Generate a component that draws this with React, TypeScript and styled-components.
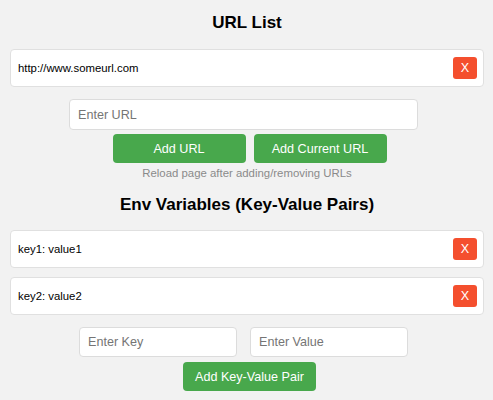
import React, { useState } from 'react';
import styled, { createGlobalStyle } from 'styled-components';

const GlobalStyle = createGlobalStyle`
  html, body {
    margin: 0;
    padding: 0;
    background: #f2f2f2;
  }
  body {
    font-family: "Liberation Sans", Arial, Helvetica, sans-serif;
    color: #111;
  }
  * {
    box-sizing: border-box;
  }
`;

const App: React.FC = () => {
  const [urls] = useState<string[]>(['http://www.someurl.com']);
  const [pairs] = useState<{ key: string; value: string }[]>([
    { key: 'key1', value: 'value1' },
    { key: 'key2', value: 'value2' },
  ]);

  return (
    <StyledPage>
      <GlobalStyle />
      <Title $top={13}>URL List</Title>
      <List $top={16}>
        {urls.map((url) => (
          <Item key={url}>
            <span>{url}</span>
            <RemoveButton>X</RemoveButton>
          </Item>
        ))}
      </List>
      <InputRow $top={12} $gap={0}>
        <TextInput placeholder="Enter URL" $width={349} $height={31} />
      </InputRow>
      <ButtonRow $top={4}>
        <Button>Add URL</Button>
        <Button>Add Current URL</Button>
      </ButtonRow>
      <Note>Reload page after adding/removing URLs</Note>
      <Title $top={15}>Env Variables (Key-Value Pairs)</Title>
      <List $top={15}>
        {pairs.map((p) => (
          <Item key={p.key}>
            <span>
              {p.key}: {p.value}
            </span>
            <RemoveButton>X</RemoveButton>
          </Item>
        ))}
      </List>
      <InputRow $top={12} $gap={13}>
        <TextInput placeholder="Enter Key" $width={158} $height={30} />
        <TextInput placeholder="Enter Value" $width={158} $height={30} />
      </InputRow>
      <ButtonRow $top={5}>
        <Button>Add Key-Value Pair</Button>
      </ButtonRow>
    </StyledPage>
  );
};

const StyledPage = styled.div`
  padding: 0 9px 0 10px;
`;

const Title = styled.h2<{ $top: number }>`
  margin: ${(p) => p.$top}px 0 0;
  font-size: 17px;
  line-height: 20px;
  font-weight: 700;
  text-align: center;
  color: #000;
`;

const List = styled.div<{ $top: number }>`
  margin-top: ${(p) => p.$top}px;
  display: flex;
  flex-direction: column;
  gap: 9px;
`;

const Item = styled.div`
  display: flex;
  align-items: center;
  justify-content: space-between;
  height: 38px;
  padding: 0 6px 0 7px;
  background: #fff;
  border: 1px solid #e0e0e0;
  border-radius: 4px;
  font-size: 11.35px;
  color: #000;
`;

const RemoveButton = styled.button`
  width: 24px;
  height: 22px;
  padding: 0;
  border: none;
  border-radius: 3px;
  background: #f44f2e;
  color: #fff;
  font-family: inherit;
  font-size: 12.6px;
  cursor: pointer;
`;

const InputRow = styled.div<{ $top: number; $gap: number }>`
  margin-top: ${(p) => p.$top}px;
  display: flex;
  justify-content: center;
  gap: ${(p) => p.$gap}px;
  padding-right: 7px;
`;

const TextInput = styled.input<{ $width: number; $height: number }>`
  width: ${(p) => p.$width}px;
  height: ${(p) => p.$height}px;
  padding: 0 8px;
  background: #fff;
  border: 1px solid #dcdcdc;
  border-radius: 4px;
  font-family: inherit;
  font-size: 12.6px;
  color: #222;
  outline: none;
  &::placeholder {
    color: #757575;
  }
`;

const ButtonRow = styled.div<{ $top: number }>`
  margin-top: ${(p) => p.$top}px;
  display: flex;
  justify-content: center;
  gap: 8px;
  padding-left: 5px;
`;

const Button = styled.button`
  width: 133px;
  height: 29px;
  padding: 0;
  border: none;
  border-radius: 4px;
  background: #48a84c;
  color: #fff;
  font-family: inherit;
  font-size: 12.6px;
  cursor: pointer;
`;

const Note = styled.div`
  margin-top: 4px;
  font-size: 11.4px;
  line-height: 13px;
  color: #8a8a8a;
  text-align: center;
`;

export default App;
